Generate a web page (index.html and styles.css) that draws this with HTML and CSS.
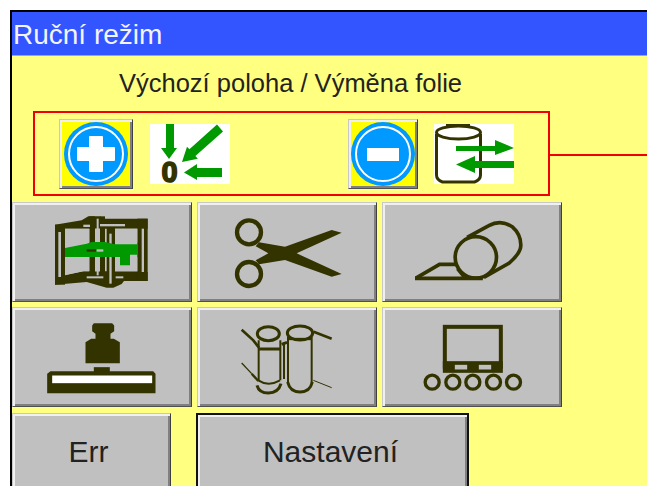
FILE: index.html
```html
<!DOCTYPE html>
<html lang="cs">
<head>
<meta charset="utf-8">
<title>Ruční režim</title>
<link rel="stylesheet" href="styles.css">
</head>
<body>
<main class="screen">
  <header class="titlebar">Ruční režim</header>
  <p class="subtitle">Výchozí poloha / Výměna folie</p>

  <section class="panel-row">
    <div class="panel">
      <button class="btn btn-round btn-plus">
        <svg width="68" height="64" viewBox="0 0 68 64">
          <circle cx="34" cy="32" r="32" fill="#0099ff"/>
          <circle cx="34" cy="32" r="27" fill="none" stroke="#fff" stroke-width="2"/>
          <path d="M28 14h12q1 0 1 1v10h11q1 0 1 1v12q0 1-1 1H41v10q0 1-1 1H28q-1 0-1-1V39H16q-1 0-1-1V26q0-1 1-1h11V15q0-1 1-1z" fill="#fff"/>
        </svg>
      </button>
      <svg class="badge badge-home" width="80" height="60" viewBox="0 0 80 60">
        <rect width="80" height="60" fill="#fff"/>
        <g fill="#009900">
          <path d="M16 0h8v24h3l-8 11L11 24h5z"/>
          <path d="M67 .6 73 7.400 45.400 32.100 47.800 34.700 32 38 37 22.700 39.400 25.300z"/>
          <path d="M47 44h25v9H47v3L34 48.500 47 40z"/>
        </g>
        <text class="zero" x="19.500" y="58">0</text>
      </svg>
      <button class="btn btn-round btn-minus">
        <svg width="64" height="64" viewBox="0 0 64 64">
          <circle cx="32" cy="32" r="32" fill="#0099ff"/>
          <circle cx="32" cy="32" r="27" fill="none" stroke="#fff" stroke-width="2"/>
          <rect x="16" y="26" width="32" height="13" fill="#fff"/>
        </svg>
      </button>
      <svg class="badge badge-swap" width="80" height="60" viewBox="0 0 80 60">
        <rect width="80" height="60" fill="#fff"/>
        <g fill="none" stroke="#333300" stroke-width="3">
          <path d="M2.500 10V51q0 5 6 7h32q6-2 6-7V10"/>
          <ellipse cx="24.500" cy="8.500" rx="22" ry="6.500"/>
          <path d="M12 1.500H36" stroke-width="3"/>
        </g>
        <g fill="#009900">
          <path d="M22 22H61v-6L80 24 61 31v-4H22z"/>
          <path d="M80 37H41v-5L22 40.500 41 49v-5h39z"/>
        </g>
      </svg>
    </div>
    <div class="connector"></div>
  </section>

  <section class="icon-grid">
    <button class="btn">
      <svg width="105" height="80" viewBox="0 0 315 240">
        <g fill="#333300">
          <path d="M15 38 95 25 115 13H150L165 20 293 20V50H15z"/>
          <path d="M15 195 100 178H262L293 180V207H222L215 216 190 227H170L110 210 15 218z"/>
          <rect x="15" y="38" width="30" height="180"/>
          <rect x="262" y="20" width="31" height="187"/>
          <rect x="118" y="13" width="17" height="195"/>
          <rect x="150" y="13" width="15" height="205"/>
          <rect x="170" y="35" width="25" height="190"/>
        </g>
        <g fill="#c0c0c0">
          <rect x="25" y="60" width="8" height="135"/>
          <rect x="275" y="50" width="7" height="130"/>
          <rect x="178" y="65" width="7" height="150"/>
          <rect x="100" y="38" width="20" height="7"/>
          <rect x="140" y="20" width="6" height="170"/>
          <rect x="150" y="36" width="75" height="7"/>
          <rect x="110" y="193" width="50" height="6"/>
          <rect x="197" y="193" width="23" height="6"/>
          <path d="M45 50H118V92L45 108z"/>
          <rect x="135" y="50" width="15" height="42"/>
          <rect x="195" y="50" width="67" height="42"/>
          <path d="M45 135H118V178H100L45 190z"/>
          <rect x="135" y="135" width="15" height="43"/>
          <rect x="195" y="135" width="67" height="43"/>
        </g>
        <path d="M45 108 110 95 125 90H165L195 97H262V128H240V160H210V135H45z" fill="#009900"/>
        <rect x="110" y="112" width="28" height="7" fill="#333300"/>
        <rect x="140" y="112" width="20" height="7" fill="#c0c0c0"/>
      </svg>
    </button>
    <button class="btn">
      <svg width="115" height="80" viewBox="685 51 345 240">
        <g fill="none" stroke="#333300" stroke-width="13">
          <circle cx="742" cy="112" r="36"/>
          <circle cx="742" cy="237" r="36"/>
        </g>
        <path d="M1020 113 990 105 850 155 772 142 762 154 800 175 762 196 772 208 850 195 990 245 1020 237 885 175z" fill="#333300"/>
      </svg>
    </button>
    <button class="btn">
      <svg width="115" height="80" viewBox="118.500 51 345 240">
        <g fill="none" stroke="#333300" stroke-width="11">
          <circle cx="301" cy="187" r="62"/>
          <path d="M275 127 340 92Q375 72 410 95 436 118 436 150 436 175 400 205L325 247"/>
          <path d="M118 250H322"/>
          <path d="M120 250 192 208H240"/>
          <path d="M245 222 268 250" stroke-width="8"/>
        </g>
      </svg>
    </button>
    <button class="btn">
      <svg width="115" height="80" viewBox="133.500 49.500 345 240">
        <path d="M280 68H335L341 75V92L330 100V115H340L358 125V188H255V125L272 115H285V100L275 92V75z" fill="#333300"/>
        <rect x="280" y="200" width="48" height="16" fill="#333300"/>
        <path d="M150 212H458L465 220V278H140V220z" fill="#333300"/>
        <rect x="155" y="225" width="300" height="23" fill="#fff"/>
      </svg>
    </button>
    <button class="btn">
      <svg width="105" height="80" viewBox="0 0 315 240">
        <g fill="none" stroke="#333300" stroke-width="9">
          <ellipse cx="100" cy="50" rx="33" ry="21"/>
          <ellipse cx="195" cy="48" rx="38" ry="21"/>
          <path d="M66 205Q72 228 100 228 130 228 138 200"/>
          <path d="M158 195Q165 225 195 225 225 225 232 195"/>
          <path d="M70 190Q100 210 135 190" stroke-width="6"/>
          <path d="M72 96H136"/>
          <path d="M140 82 156 76"/>
          <path d="M160 66H230" stroke-width="7"/>
        </g>
        <g fill="none" stroke="#333300" stroke-width="6">
          <path d="M71 70V190M136 70V190M147 76V186M159 60V198M230 60V198"/>
        </g>
        <g fill="none" stroke="#333300">
          <path d="M20 38 55 70 72 92" stroke-width="8"/>
          <path d="M236 44 290 65" stroke-width="8"/>
          <path d="M20 138 50 170" stroke-width="4"/>
          <path d="M50 170 70 192" stroke-width="7"/>
          <path d="M235 190 290 212" stroke-width="3"/>
        </g>
      </svg>
    </button>
    <button class="btn">
      <svg width="115" height="80" viewBox="118.500 364.500 345 240">
        <rect x="208" y="394" width="168" height="120" fill="none" stroke="#333300" stroke-width="12"/>
        <rect x="202" y="497" width="180" height="35" fill="#333300"/>
        <rect x="238" y="508" width="37" height="14" fill="#c0c0c0"/>
        <rect x="310" y="508" width="37" height="14" fill="#c0c0c0"/>
        <g fill="#c0c0c0" stroke="#333300" stroke-width="10">
          <circle cx="170" cy="560" r="21"/>
          <circle cx="232" cy="560" r="21"/>
          <circle cx="292" cy="560" r="21"/>
          <circle cx="354" cy="560" r="21"/>
          <circle cx="414" cy="560" r="21"/>
        </g>
      </svg>
    </button>
  </section>

  <section class="action-row">
    <button class="btn btn-text btn-err">Err</button>
    <button class="btn btn-text btn-settings">Nastavení</button>
  </section>
</main>
</body>
</html>
```
FILE: styles.css
```css
* {
  box-sizing: border-box;
}

html,
body {
  height: 100%;
  margin: 0;
  overflow: hidden;
  background: #fff;
}

.screen {
  margin: 10px 0 0 10px;
  height: 476px;
  overflow: hidden;
  display: flex;
  flex-direction: column;
  background: #ffff80;
  border-top: 2px solid #000;
  border-left: 2px solid #000;
  font-family: "Liberation Sans", Arial, sans-serif;
  color: #222;
}

.titlebar {
  height: 44px;
  flex: none;
  padding: 7px 0 0 1px;
  background: #3355ff;
  border-bottom: 1px solid #a8a890;
  color: #f4f4ff;
  font-size: 28px;
  line-height: 32px;
  white-space: nowrap;
}

.subtitle {
  margin: 12px 0 0;
  height: 43px;
  flex: none;
  padding-left: 107px;
  font-size: 25.500px;
  line-height: 30px;
  white-space: nowrap;
}

.panel-row {
  display: flex;
  align-items: flex-start;
  flex: none;
  padding-left: 21px;
}

.panel {
  width: 517px;
  height: 85px;
  flex: none;
  display: flex;
  align-items: center;
  padding-left: 24px;
  border: 2px solid #f00000;
}

.connector {
  flex: 1;
  height: 2px;
  margin-top: 43px;
  background: #f00000;
}

.btn {
  display: flex;
  align-items: center;
  justify-content: center;
  padding: 0;
  background: #c0c0c0;
  border-style: solid;
  border-width: 1px;
  border-color: #c8c8c8 #404040 #505050 #c8c8c8;
  box-shadow: inset 2px 2px 0 #f0f0f0, inset -2px -2px 0 #808080;
  font-family: inherit;
}

.btn svg {
  flex: none;
}

.btn-round {
  height: 70px;
  flex: none;
  background: #ffff00;
}

.btn-plus {
  width: 74px;
}

.btn-minus {
  width: 70px;
}

.badge {
  flex: none;
  overflow: visible;
}

.badge-home {
  margin: 0 118px 0 17px;
}

.badge-swap {
  margin-left: 16px;
}

.zero {
  font-family: "Liberation Sans", Arial, sans-serif;
  font-weight: 700;
  font-size: 29px;
  fill: #333300;
  stroke: #333300;
  stroke-width: 1.500px;
  text-anchor: middle;
}

.icon-grid {
  margin-top: 6px;
  display: grid;
  grid-template-columns: 180px 180px 180px;
  grid-auto-rows: 100px;
  column-gap: 5px;
  row-gap: 5px;
  flex: none;
  width: 550px;
}

.action-row {
  margin-top: 6px;
  display: flex;
  gap: 25px;
  flex: none;
}

.btn-text {
  height: 90px;
  font-size: 30px;
  color: #222;
}

.btn-err {
  width: 159px;
  padding: 0 6px 12px 0;
}

.btn-settings {
  width: 273px;
  padding: 0 4px 12px 0;
  border: 2px solid #111;
}
```
